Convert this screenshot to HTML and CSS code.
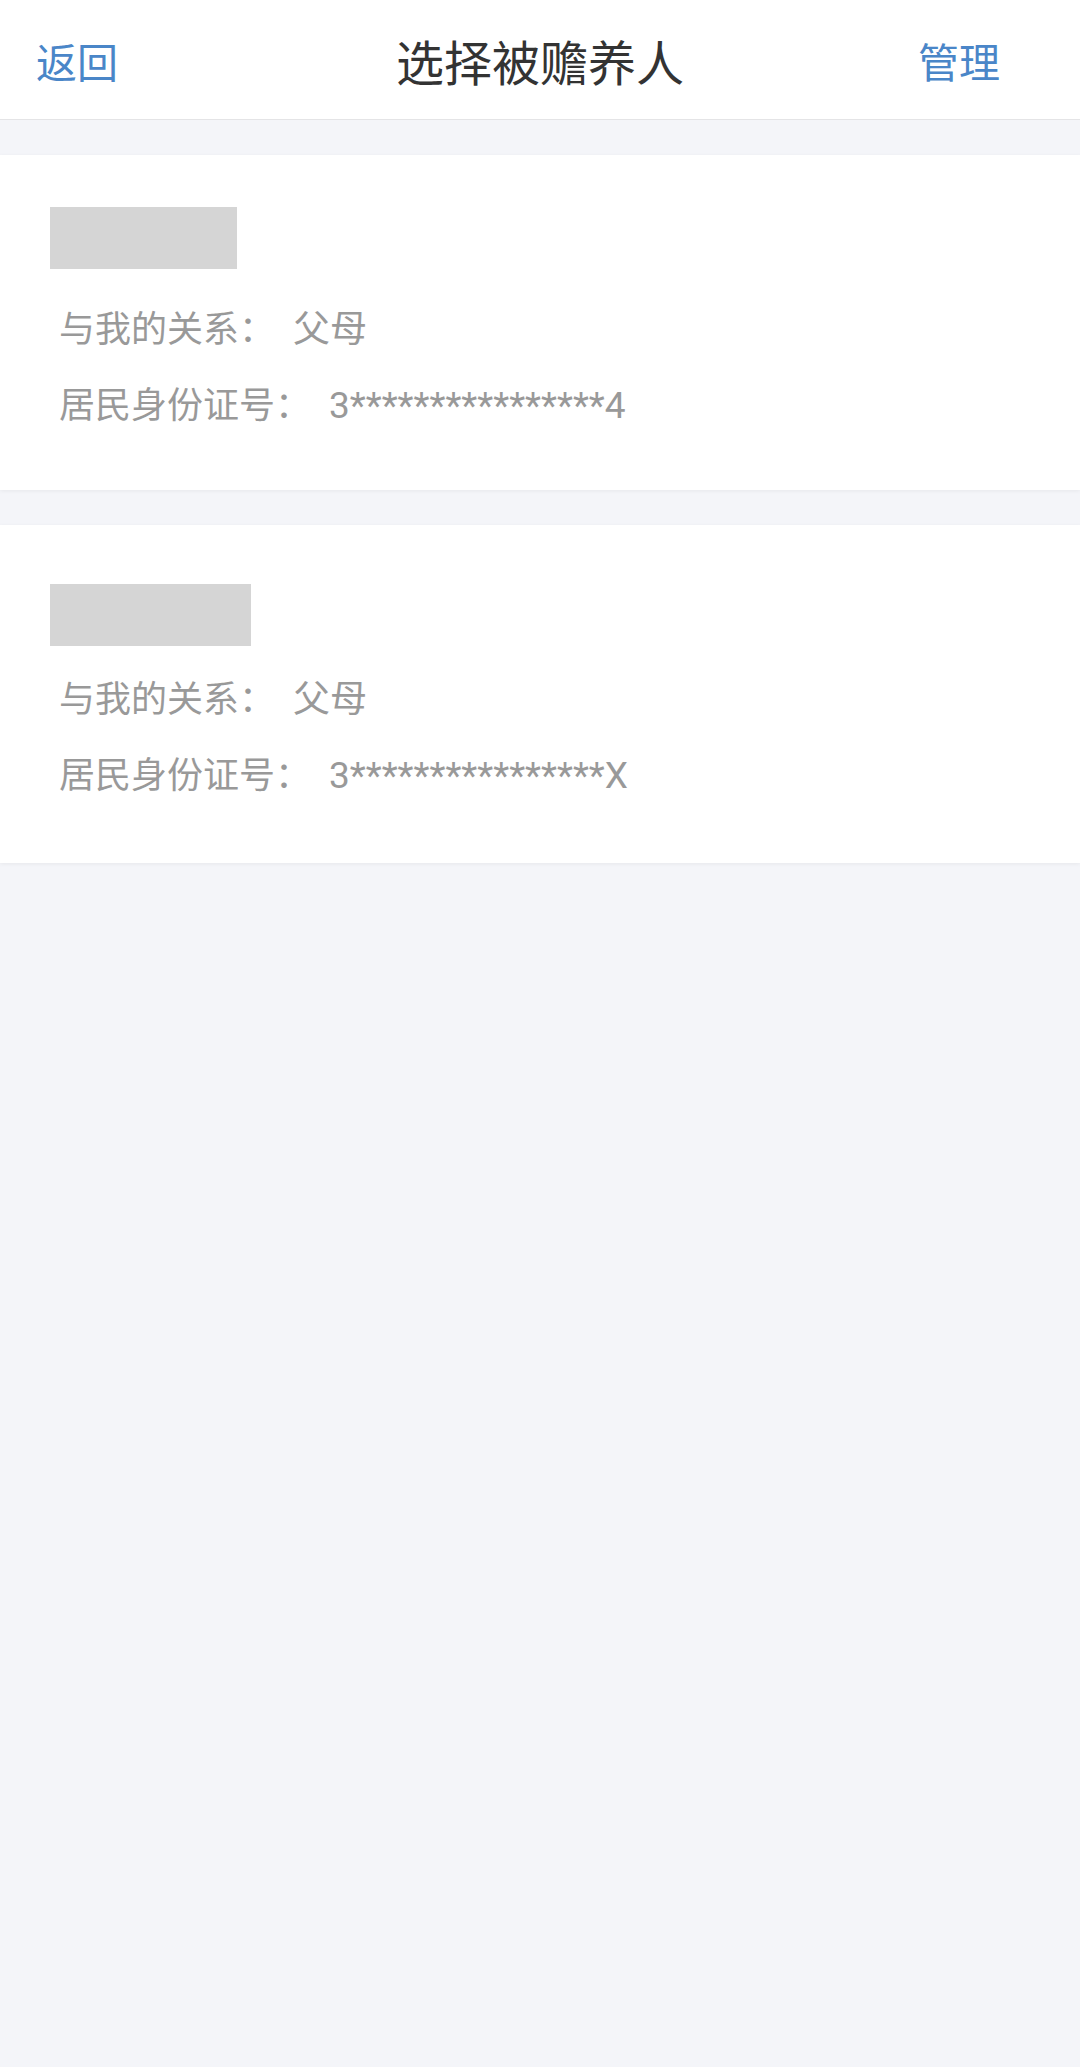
FILE: index.html
```html
<!DOCTYPE html>
<html lang="zh-CN">
<head>
  <meta charset="UTF-8" />
  <meta name="viewport" content="width=device-width, initial-scale=1.0"/>
  <title>选择被赡养人</title>
  <link rel="stylesheet" href="styles.css">
</head>
<body>
  <div class="topbar">
    <span class="link">返回</span>
    <h1 class="title">选择被赡养人</h1>
    <span class="link direita">管理</span>
  </div>

  <div class="lista">
    <div class="card">
      <div class="nome" style="width:187px"></div>
      <div class="linha">与我的关系：<span class="valor">父母</span></div>
      <div class="linha">居民身份证号：<span class="valor">3****************4</span></div>
    </div>
    <div class="card card-alto">
      <div class="nome" style="width:201px"></div>
      <div class="linha">与我的关系：<span class="valor">父母</span></div>
      <div class="linha">居民身份证号：<span class="valor">3****************X</span></div>
    </div>
  </div>
</body>
</html>
```

FILE: styles.css
```css
body {
  margin: 0;
  min-height: 2067px;
  background-color: #f4f5f9;
  font-family: "Noto Sans CJK SC", "Noto Sans", sans-serif;
}
.topbar {
  height: 120px;
  background-color: #fff;
  border-bottom: 1px solid #e4e4e6;
  display: grid;
  grid-template-columns: 1fr auto 1fr;
  align-items: center;
  padding: 0 80px 0 36px;
  box-sizing: border-box;
}
.link {
  font-size: 41px;
  color: #4a86c8;
}
.direita {
  justify-self: end;
}
.title {
  margin: 0 0 0 44px;
  font-size: 48px;
  font-weight: normal;
  color: #333;
}
.lista {
  padding-top: 35px;
  display: flex;
  flex-direction: column;
  gap: 35px;
}
.card {
  background-color: #fff;
  padding: 52px 0 50px 50px;
  box-shadow: 0 1px 4px rgba(0,0,0,0.06);
}
.card-alto {
  padding-bottom: 53px;
}
.card-alto .nome {
  margin-top: 7px;
  margin-bottom: 12px;
}
.nome {
  height: 62px;
  background-color: #d5d5d5;
  margin-bottom: 19px;
}
.linha {
  height: 76px;
  font-size: 36px;
  line-height: 76px;
  color: #999;
  padding-left: 9px;
}
.valor {
  margin-left: 18px;
  font-size: 37px;
  line-height: 1;
  font-family: "Roboto", "Noto Sans CJK SC", sans-serif;
}
```
